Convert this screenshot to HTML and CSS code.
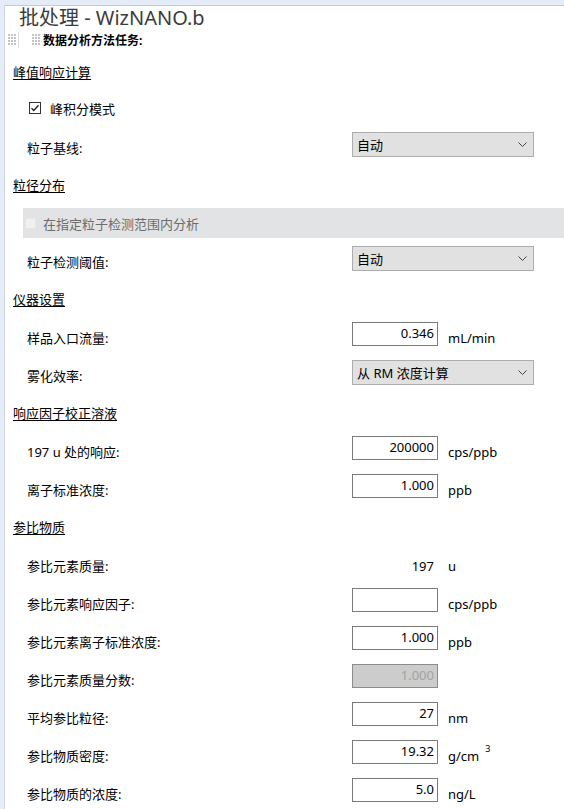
FILE: index.html
```html
<!DOCTYPE html>
<html lang="zh-CN">
<head>
    <meta charset="UTF-8">
    <title>批处理 - WizNANO.b</title>
    <link rel="stylesheet" href="styles.css">
</head>
<body>
    <div class="window">
        <div class="pane">
            <h1 class="title">批处理 - WizNANO.b</h1>

            <div class="task-bar">
                <svg class="grip" width="8" height="12" viewBox="0 0 8 12">
                    <defs>
                        <pattern id="dots" width="3" height="3" patternUnits="userSpaceOnUse">
                            <rect width="2" height="2" fill="#c4c4c4"/>
                        </pattern>
                    </defs>
                    <rect width="8" height="12" fill="url(#dots)"/>
                </svg>
                <span class="sep"></span>
                <svg class="grip grip-inner" width="8" height="12" viewBox="0 0 8 12">
                    <rect width="8" height="12" fill="url(#dots)"/>
                </svg>
                <b>数据分析方法任务:</b>
            </div>

            <!-- 峰值响应计算 -->
            <h2 class="group-title">峰值响应计算</h2>
            <div class="check-row">
                <svg class="check" width="12" height="12" viewBox="0 0 12 12">
                    <rect x="0.5" y="0.5" width="11" height="11" fill="#fff" stroke="#333"/>
                    <path d="M2.5 6.2 L4.8 8.5 L9.5 3.3" fill="none" stroke="#222" stroke-width="1.3"/>
                </svg>
                <span>峰积分模式</span>
            </div>
            <div class="field">
                <span class="label">粒子基线:</span>
                <div class="combo"><span>自动</span><svg width="9" height="5" viewBox="0 0 9 5"><path d="M0.5 0.5 L4.5 4.5 L8.5 0.5" fill="none" stroke="#444"/></svg></div>
            </div>

            <!-- 粒径分布 -->
            <h2 class="group-title">粒径分布</h2>
            <div class="band">
                <span class="check-off"></span>
                <span>在指定粒子检测范围内分析</span>
            </div>
            <div class="field">
                <span class="label">粒子检测阈值:</span>
                <div class="combo"><span>自动</span><svg width="9" height="5" viewBox="0 0 9 5"><path d="M0.5 0.5 L4.5 4.5 L8.5 0.5" fill="none" stroke="#444"/></svg></div>
            </div>

            <!-- 仪器设置 -->
            <h2 class="group-title">仪器设置</h2>
            <div class="field">
                <span class="label">样品入口流量:</span>
                <input class="num" type="text" value="0.346">
                <span class="unit">mL/min</span>
            </div>
            <div class="field">
                <span class="label">雾化效率:</span>
                <div class="combo"><span>从 RM 浓度计算</span><svg width="9" height="5" viewBox="0 0 9 5"><path d="M0.5 0.5 L4.5 4.5 L8.5 0.5" fill="none" stroke="#444"/></svg></div>
            </div>

            <!-- 响应因子校正溶液 -->
            <h2 class="group-title">响应因子校正溶液</h2>
            <div class="field">
                <span class="label">197 u 处的响应:</span>
                <input class="num" type="text" value="200000">
                <span class="unit">cps/ppb</span>
            </div>
            <div class="field">
                <span class="label">离子标准浓度:</span>
                <input class="num" type="text" value="1.000">
                <span class="unit">ppb</span>
            </div>

            <!-- 参比物质 -->
            <h2 class="group-title">参比物质</h2>
            <div class="field">
                <span class="label">参比元素质量:</span>
                <span class="value">197</span>
                <span class="unit">u</span>
            </div>
            <div class="field">
                <span class="label">参比元素响应因子:</span>
                <input class="num" type="text" value="">
                <span class="unit">cps/ppb</span>
            </div>
            <div class="field">
                <span class="label">参比元素离子标准浓度:</span>
                <input class="num" type="text" value="1.000">
                <span class="unit">ppb</span>
            </div>
            <div class="field">
                <span class="label">参比元素质量分数:</span>
                <input class="num" type="text" value="1.000" disabled>
                <span class="unit"></span>
            </div>
            <div class="field">
                <span class="label">平均参比粒径:</span>
                <input class="num" type="text" value="27">
                <span class="unit">nm</span>
            </div>
            <div class="field">
                <span class="label">参比物质密度:</span>
                <input class="num" type="text" value="19.32">
                <span class="unit">g/cm<sup class="exp">3</sup></span>
            </div>
            <div class="field">
                <span class="label">参比物质的浓度:</span>
                <input class="num" type="text" value="5.0">
                <span class="unit">ng/L</span>
            </div>
        </div>
    </div>
</body>
</html>
```

FILE: styles.css
```css
body {
    margin: 0;
    font-family: "Noto Sans", "Noto Sans CJK SC", sans-serif;
    font-size: 13px;
    color: #000;
    background: #fff;
    overflow: hidden;
}
.window {
    border-top: 5px solid #e4edf7;
    border-left: 4px solid #e4edf7;
    height: 804px;
}
.pane {
    display: flex;
    flex-direction: column;
    border-top: 1px solid #c6cacf;
    border-left: 1px solid #d3d8de;
    height: 100%;
}
.pane > * {
    flex: none;
}
.title {
    margin: 0;
    padding-left: 14px;
    height: 24px;
    line-height: 24px;
    font-size: 20px;
    font-weight: normal;
    color: #3c3c3c;
}
.task-bar {
    display: flex;
    align-items: center;
    height: 20px;
    margin-bottom: 7px;
    font-size: 12px;
}
.grip {
    margin-left: 3px;
}
.grip-inner {
    margin-left: 13px;
}
.sep {
    width: 1px;
    height: 16px;
    margin-left: 2px;
    background: #dcdcdc;
}
.task-bar b {
    margin-left: 3px;
}
.group-title {
    margin: 5px 0 13px;
    padding-left: 8px;
    height: 20px;
    line-height: 20px;
    font-size: 13px;
    font-weight: normal;
    text-decoration: underline;
    text-underline-offset: 2px;
}
.check-row {
    display: flex;
    align-items: center;
    height: 20px;
    margin: 3px 0 14px 24px;
}
.check {
    margin-right: 9px;
}
.band {
    display: flex;
    align-items: center;
    height: 30px;
    margin: 0 0 8px 18px;
    padding-left: 2px;
    background: #e2e3e5;
    color: #6d6d6d;
}
.check-off {
    width: 9px;
    height: 9px;
    margin-right: 7px;
    background: #f0f0f0;
    border: 1px solid #e6e6e6;
}
.field {
    display: grid;
    grid-template-columns: 325px 86px auto;
    align-items: start;
    height: 38px;
    padding-left: 22px;
}
.label, .unit, .value {
    padding-top: 6px;
    line-height: 20px;
}
.unit {
    padding-left: 10px;
}
.value {
    text-align: right;
    padding-right: 4px;
}
.num {
    box-sizing: border-box;
    width: 86px;
    height: 24px;
    margin: 0;
    padding: 0 3px 2px;
    border: 1px solid #7a7a7a;
    font-family: "Noto Sans", sans-serif;
    font-size: 13px;
    text-align: right;
    color: #000;
    background: #fff;
}
.num:disabled {
    background: #cccccc;
    border-color: #8c8c8c;
    color: #a2a2a2;
}
.combo {
    grid-column: 2 / 4;
    box-sizing: border-box;
    width: 182px;
    height: 25px;
    display: flex;
    align-items: center;
    justify-content: space-between;
    padding: 0 6px 0 4px;
    background: #e1e1e1;
    border: 1px solid #adadad;
}
.exp {
    font-size: 9px;
    line-height: 0;
    margin-left: 6px;
    vertical-align: 9px;
}
```
